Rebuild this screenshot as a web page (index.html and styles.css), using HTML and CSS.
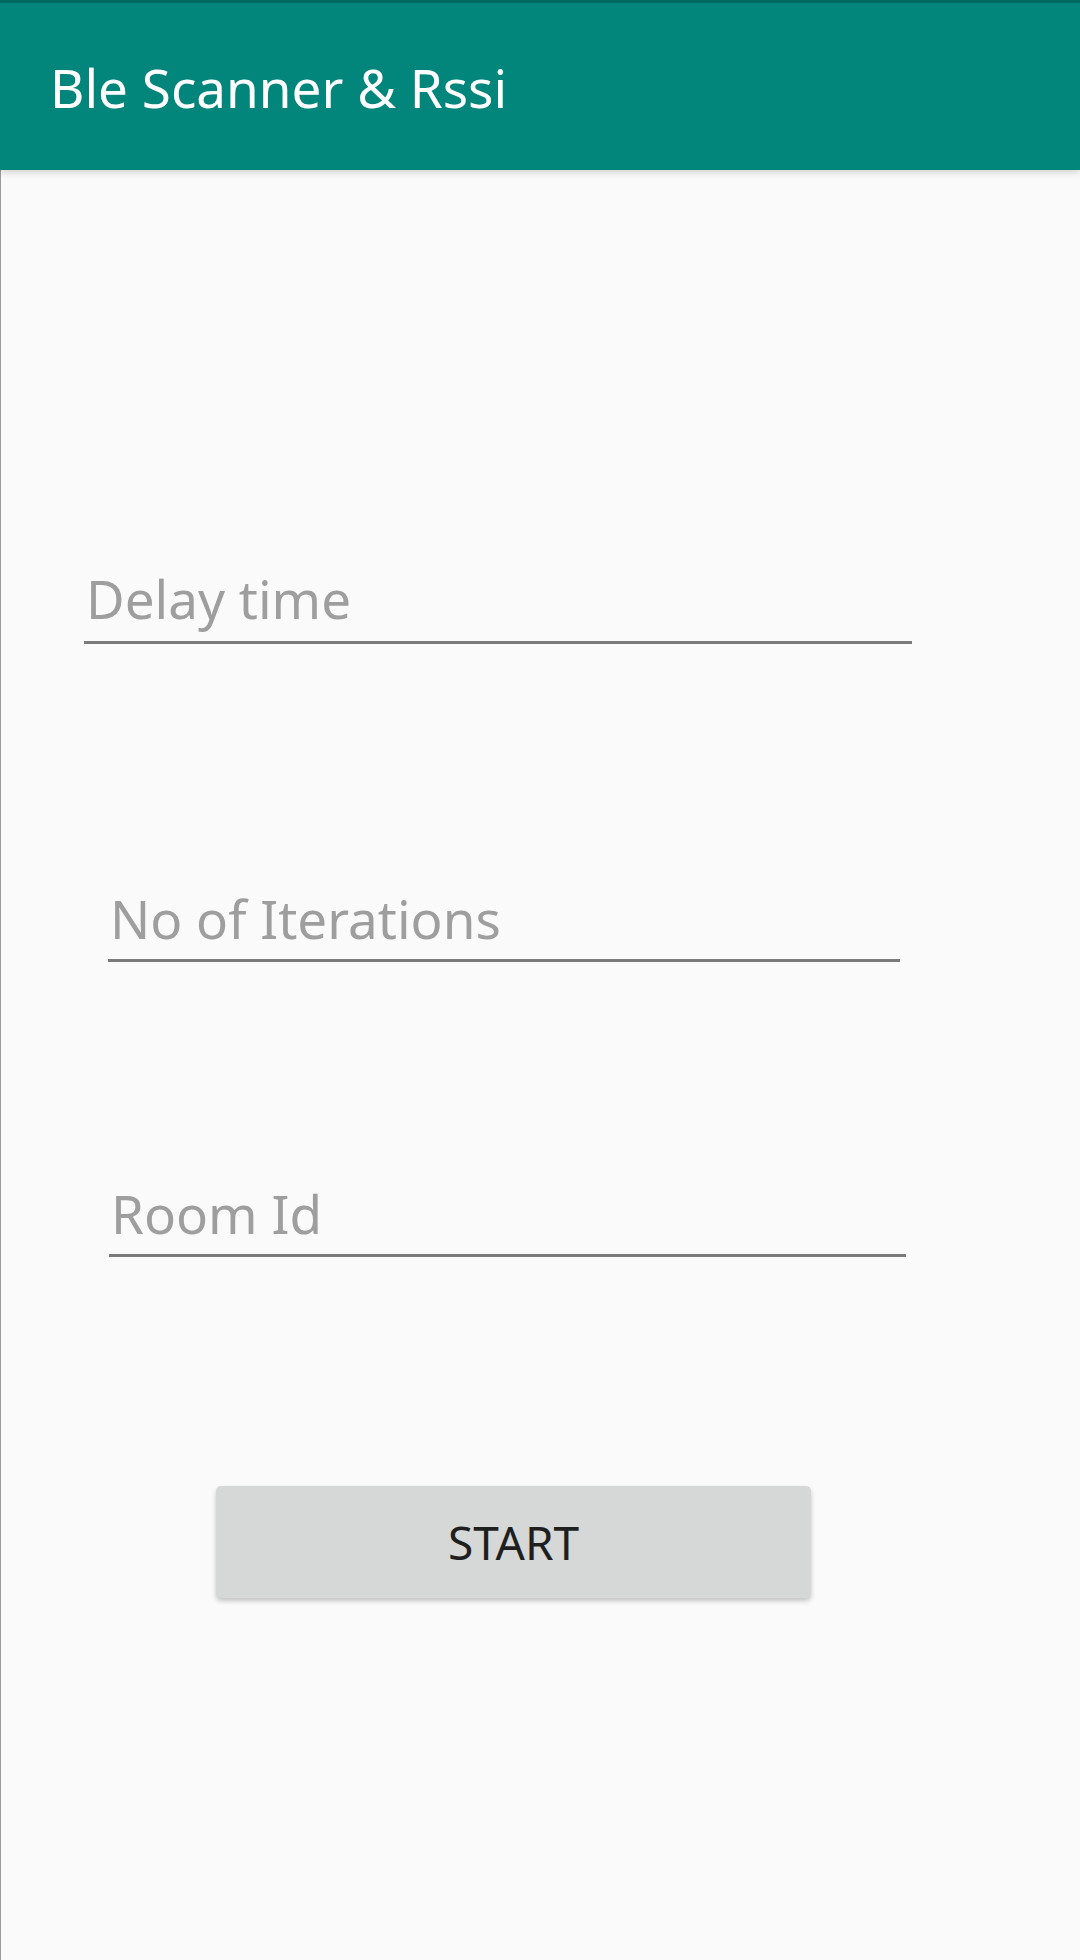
FILE: index.html
```html
<!DOCTYPE html>
<html>
<head>
<meta charset="utf-8">
<link rel="stylesheet" href="styles.css">
</head>
<body>
<header class="toolbar">
  <h1 class="title">Ble Scanner &amp; Rssi</h1>
</header>
<main class="content">
  <div class="field field-delay"><span class="hint">Delay time</span></div>
  <div class="field field-iter"><span class="hint">No of Iterations</span></div>
  <div class="field field-room"><span class="hint">Room Id</span></div>
  <div class="button-row">
    <button class="btn">START</button>
  </div>
</main>
</body>
</html>
```
FILE: styles.css
```css
html, body {
  margin: 0;
  padding: 0;
  background: #fafafa;
}
body {
  width: 1080px;
  height: 1960px;
  overflow: hidden;
  font-family: "Noto Sans", "Open Sans", sans-serif;
}
.toolbar {
  height: 167px;
  background: #02857a;
  border-top: 3px solid #016a60;
  display: flex;
  align-items: center;
  position: relative;
  z-index: 2;
  box-shadow: 0 2px 8px rgba(0,0,0,0.18);
}
.title {
  margin: 0 0 0 50px;
  font-weight: 400;
  font-size: 53px;
  color: #ffffff;
  line-height: 60px;
  padding-top: 3px;
}
.content {
  border-left: 1px solid #9c9c9c;
  height: 1790px;
  display: flex;
  flex-direction: column;
}
.field {
  border-bottom: 3px solid #7b7b7b;
  line-height: 60px;
  font-size: 53px;
  color: #9e9e9e;
}
.hint {
  display: block;
  padding-left: 2px;
}
.field-delay {
  margin: 399px 0 0 83px;
  width: 828px;
  padding-bottom: 12px;
}
.field-iter {
  margin: 245px 0 0 107px;
  width: 792px;
  padding-bottom: 10px;
}
.field-room {
  margin: 222px 0 0 108px;
  width: 797px;
  padding-bottom: 10px;
}
.button-row {
  margin: 229px 0 0 215px;
}
.btn {
  width: 595px;
  height: 112px;
  background: #d6d7d7;
  border: none;
  border-radius: 5px;
  box-shadow: 0 3px 5px rgba(0,0,0,0.22);
  font-family: "Noto Sans", "Open Sans", sans-serif;
  font-size: 46px;
  color: #1f1f1f;
  padding: 0;
}
```
